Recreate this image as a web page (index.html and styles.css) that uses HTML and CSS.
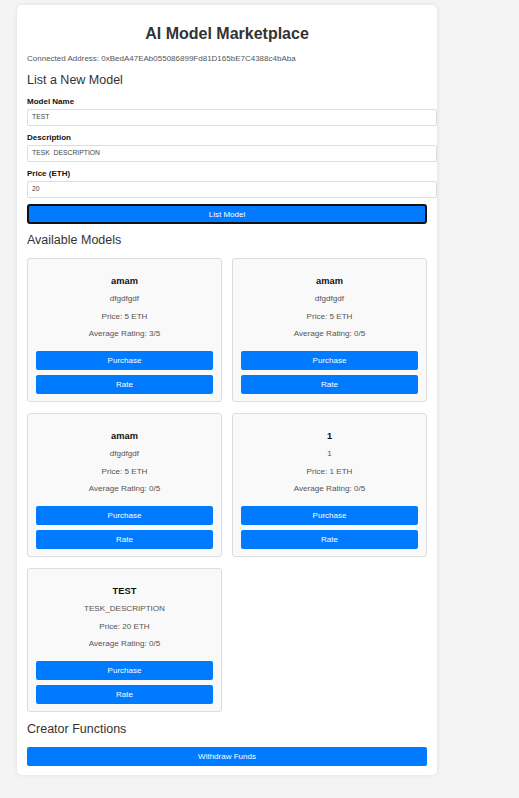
FILE: index.html
```html
<!DOCTYPE html>
<html lang="en">
<head>
<meta charset="utf-8">
<title>AI Model Marketplace</title>
<link rel="stylesheet" href="styles.css">
</head>
<body>
<div class="container">
  <h1 class="title">AI Model Marketplace</h1>
  <p class="address">Connected Address: 0xBedA47EAb055086899Fd81D165bE7C4388c4bAba</p>

  <h2 class="section-title">List a New Model</h2>
  <form class="list-form">
    <div class="field">
      <label class="field-label">Model Name</label>
      <div class="field-input">TEST</div>
    </div>
    <div class="field">
      <label class="field-label">Description</label>
      <div class="field-input">TESK&nbsp; DESCRIPTION</div>
    </div>
    <div class="field">
      <label class="field-label">Price (ETH)</label>
      <div class="field-input">20</div>
    </div>
    <button type="button" class="btn btn-focused">List Model</button>
  </form>

  <h2 class="section-title section-models">Available Models</h2>
  <div class="models">
    <div class="card">
      <h3 class="card-title">amam</h3>
      <p class="card-desc">dfgdfgdf</p>
      <p class="card-price">Price: 5 ETH</p>
      <p class="card-rating">Average Rating: 3/5</p>
      <button type="button" class="btn card-btn">Purchase</button>
      <button type="button" class="btn card-btn card-btn-rate">Rate</button>
    </div>
    <div class="card">
      <h3 class="card-title">amam</h3>
      <p class="card-desc">dfgdfgdf</p>
      <p class="card-price">Price: 5 ETH</p>
      <p class="card-rating">Average Rating: 0/5</p>
      <button type="button" class="btn card-btn">Purchase</button>
      <button type="button" class="btn card-btn card-btn-rate">Rate</button>
    </div>
    <div class="card">
      <h3 class="card-title">amam</h3>
      <p class="card-desc">dfgdfgdf</p>
      <p class="card-price">Price: 5 ETH</p>
      <p class="card-rating">Average Rating: 0/5</p>
      <button type="button" class="btn card-btn">Purchase</button>
      <button type="button" class="btn card-btn card-btn-rate">Rate</button>
    </div>
    <div class="card">
      <h3 class="card-title">1</h3>
      <p class="card-desc">1</p>
      <p class="card-price">Price: 1 ETH</p>
      <p class="card-rating">Average Rating: 0/5</p>
      <button type="button" class="btn card-btn">Purchase</button>
      <button type="button" class="btn card-btn card-btn-rate">Rate</button>
    </div>
    <div class="card">
      <h3 class="card-title">TEST</h3>
      <p class="card-desc">TESK_DESCRIPTION</p>
      <p class="card-price">Price: 20 ETH</p>
      <p class="card-rating">Average Rating: 0/5</p>
      <button type="button" class="btn card-btn">Purchase</button>
      <button type="button" class="btn card-btn card-btn-rate">Rate</button>
    </div>
  </div>

  <h2 class="section-title section-creator">Creator Functions</h2>
  <button type="button" class="btn withdraw">Withdraw Funds</button>
</div>
</body>
</html>
```

FILE: styles.css
```css
html, body {
  margin: 0;
  padding: 0;
}

body {
  background: #f4f4f4;
  font-family: "Liberation Sans", Arial, sans-serif;
  color: #333;
  padding: 5px 17px 24px;
  min-height: 798px;
  box-sizing: border-box;
}

.container {
  width: 420px;
  box-sizing: border-box;
  background: #fff;
  border-radius: 5px;
  box-shadow: 0 0 4px rgba(0, 0, 0, 0.1);
  padding: 10px 10px 9px;
}

.title {
  margin: 10.3px 0 0;
  font-size: 16px;
  line-height: 18.4px;
  font-weight: bold;
  text-align: center;
  color: #333;
}

.address {
  margin: 10.5px 0 0;
  font-size: 8px;
  line-height: 9.2px;
  color: #555;
}

.section-title {
  margin: 9.3px 0 0;
  font-size: 12.5px;
  line-height: 14.4px;
  font-weight: normal;
  color: #333;
}

.list-form {
  margin: 9.8px 0 0;
}

.field {
  margin-bottom: 7.3px;
}

.field-label {
  display: block;
  font-size: 8px;
  line-height: 9.2px;
  font-weight: bold;
  color: #111;
  margin-bottom: 3px;
}

.field-input {
  box-sizing: content-box;
  width: 100%;
  height: 8.5px;
  padding: 3px 4px;
  border: 1px solid #ddd;
  border-radius: 2px;
  font-size: 6.8px;
  line-height: 8.5px;
  color: #444;
  background: #fff;
  white-space: nowrap;
}

.btn {
  display: block;
  width: 100%;
  box-sizing: border-box;
  border: none;
  border-radius: 2px;
  background: #007bff;
  color: #fff;
  font-family: "Liberation Sans", Arial, sans-serif;
  font-size: 8px;
  line-height: 9px;
  padding: 0;
  text-align: center;
  cursor: pointer;
}

.btn-focused {
  height: 20.3px;
  border: 2px solid #111;
  border-radius: 3px;
  margin-top: -0.8px;
  padding-top: 1px;
}

.section-models {
  margin-top: 8.5px;
}

.models {
  margin-top: 11px;
  display: grid;
  grid-template-columns: 1fr 1fr;
  column-gap: 10px;
  row-gap: 11px;
}

.card {
  box-sizing: border-box;
  height: 144px;
  border: 1px solid #ddd;
  border-radius: 3px;
  background: #f9f9f9;
  padding: 8px 8px 7px;
  text-align: center;
  display: flex;
  flex-direction: column;
}

.card-title {
  margin: 9px 0 0;
  font-size: 9.3px;
  line-height: 11px;
  font-weight: bold;
  color: #111;
}

.card-desc,
.card-price,
.card-rating {
  margin: 0;
  font-size: 8.1px;
  line-height: 10px;
  color: #555;
}

.card-desc {
  margin-top: 7px;
}

.card-price {
  margin-top: 8px;
}

.card-rating {
  margin-top: 7px;
}

.card-btn {
  height: 19px;
  margin-top: 12px;
}

.card-btn-rate {
  margin-top: 5px;
}

.section-creator {
  margin-top: 9.5px;
}

.withdraw {
  height: 19px;
  margin-top: 11px;
}
```
